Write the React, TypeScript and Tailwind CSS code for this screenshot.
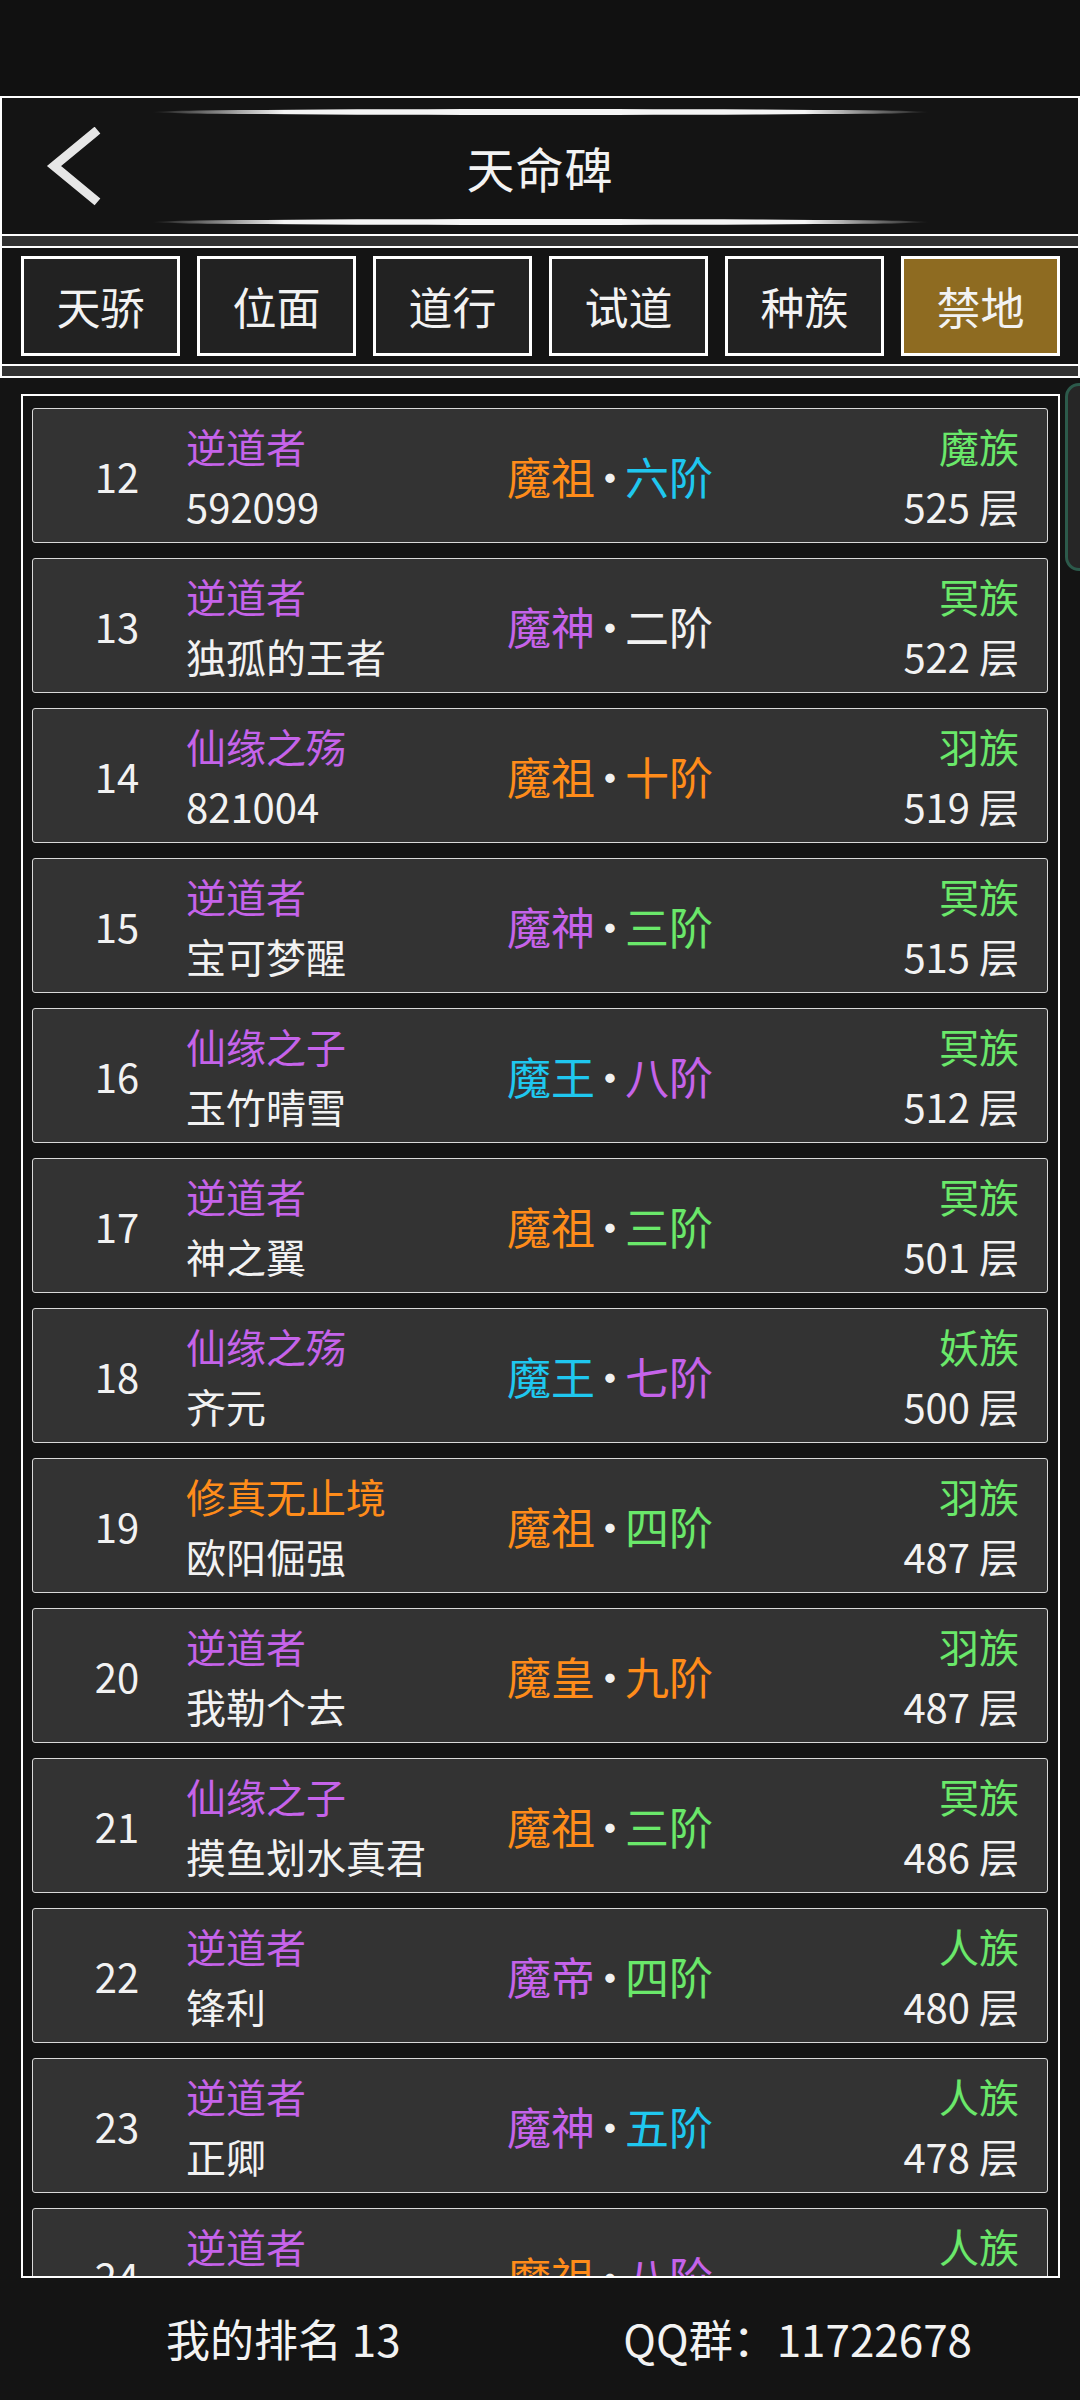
import React from 'react';

type Seg = { text: string; color: string };

interface RankRow {
    rank: number;
    title: Seg;
    name: string;
    realm: Seg;
    stage: Seg;
    race: string;
    floor: number;
}

const PURPLE = 'text-[#c563ea]';
const ORANGE = 'text-[#ff8c1a]';
const CYAN = 'text-[#1fc7ef]';
const GREEN = 'text-[#6ae86a]';
const WHITE = 'text-[#f2f2f2]';

const rows: RankRow[] = [
    { rank: 12, title: { text: '逆道者', color: PURPLE }, name: '592099', realm: { text: '魔祖', color: ORANGE }, stage: { text: '六阶', color: CYAN }, race: '魔族', floor: 525 },
    { rank: 13, title: { text: '逆道者', color: PURPLE }, name: '独孤的王者', realm: { text: '魔神', color: PURPLE }, stage: { text: '二阶', color: WHITE }, race: '冥族', floor: 522 },
    { rank: 14, title: { text: '仙缘之殇', color: PURPLE }, name: '821004', realm: { text: '魔祖', color: ORANGE }, stage: { text: '十阶', color: ORANGE }, race: '羽族', floor: 519 },
    { rank: 15, title: { text: '逆道者', color: PURPLE }, name: '宝可梦醒', realm: { text: '魔神', color: PURPLE }, stage: { text: '三阶', color: GREEN }, race: '冥族', floor: 515 },
    { rank: 16, title: { text: '仙缘之子', color: PURPLE }, name: '玉竹晴雪', realm: { text: '魔王', color: CYAN }, stage: { text: '八阶', color: PURPLE }, race: '冥族', floor: 512 },
    { rank: 17, title: { text: '逆道者', color: PURPLE }, name: '神之翼', realm: { text: '魔祖', color: ORANGE }, stage: { text: '三阶', color: GREEN }, race: '冥族', floor: 501 },
    { rank: 18, title: { text: '仙缘之殇', color: PURPLE }, name: '齐元', realm: { text: '魔王', color: CYAN }, stage: { text: '七阶', color: PURPLE }, race: '妖族', floor: 500 },
    { rank: 19, title: { text: '修真无止境', color: ORANGE }, name: '欧阳倔强', realm: { text: '魔祖', color: ORANGE }, stage: { text: '四阶', color: GREEN }, race: '羽族', floor: 487 },
    { rank: 20, title: { text: '逆道者', color: PURPLE }, name: '我勒个去', realm: { text: '魔皇', color: ORANGE }, stage: { text: '九阶', color: ORANGE }, race: '羽族', floor: 487 },
    { rank: 21, title: { text: '仙缘之子', color: PURPLE }, name: '摸鱼划水真君', realm: { text: '魔祖', color: ORANGE }, stage: { text: '三阶', color: GREEN }, race: '冥族', floor: 486 },
    { rank: 22, title: { text: '逆道者', color: PURPLE }, name: '锋利', realm: { text: '魔帝', color: PURPLE }, stage: { text: '四阶', color: GREEN }, race: '人族', floor: 480 },
    { rank: 23, title: { text: '逆道者', color: PURPLE }, name: '正卿', realm: { text: '魔神', color: PURPLE }, stage: { text: '五阶', color: CYAN }, race: '人族', floor: 478 },
    { rank: 24, title: { text: '逆道者', color: PURPLE }, name: '云中客', realm: { text: '魔祖', color: ORANGE }, stage: { text: '八阶', color: PURPLE }, race: '人族', floor: 476 },
];

const tabs = ['天骄', '位面', '道行', '试道', '种族', '禁地'];

const GlowLine = () => (
    <div className="h-[6px] w-[777px] rounded-[50%] bg-[linear-gradient(90deg,rgba(255,255,255,0)_0%,#f4f4f4_17%,#f4f4f4_84%,rgba(255,255,255,0)_100%)]" />
);

const Row = ({ row }: { row: RankRow }) => (
    <div className="flex h-[135px] shrink-0 items-center rounded-[3px] border border-[#d9d9d9] bg-[#333333]">
        {/* rank */}
        <div className="ml-[29px] w-[110px] text-center text-[40px] leading-[60px] text-[#f2f2f2]">{row.rank}</div>

        {/* title + name */}
        <div className="ml-[14px] w-[300px] whitespace-nowrap text-[40px] leading-[60px]">
            <div className={row.title.color}>{row.title.text}</div>
            <div className="text-[#f2f2f2]">{row.name}</div>
        </div>

        {/* realm */}
        <div className="w-[248px] whitespace-nowrap text-center text-[44px] leading-[60px]">
            <span className={row.realm.color}>{row.realm.text}</span>
            <span className="mx-[-7px] text-[#f2f2f2]">·</span>
            <span className={row.stage.color}>{row.stage.text}</span>
        </div>

        {/* race + floor */}
        <div className="flex-1 whitespace-nowrap pr-[28px] text-right text-[40px] leading-[60px]">
            <div className={GREEN}>{row.race}</div>
            <div className="text-[#f2f2f2]">{row.floor} 层</div>
        </div>
    </div>
);

export default function App() {
    return (
        <div className="flex h-[2400px] w-[1080px] flex-col overflow-hidden bg-[#141414] font-['Noto_Sans_CJK_SC','Noto_Sans',sans-serif] text-[#f2f2f2]">
            {/* status bar */}
            <div className="h-[96px] shrink-0 bg-[#111111]" />

            {/* header */}
            <div className="relative flex h-[140px] shrink-0 flex-col items-center justify-between border-2 border-white bg-[#141414] pb-[9px] pt-[11px]">
                <GlowLine />
                <span className="text-[48px] leading-none tracking-[1px]">天命碑</span>
                <GlowLine />
                <svg className="absolute left-[40px] top-[29px]" width="60" height="80" viewBox="0 0 60 80">
                    <polyline points="52,6 12,39 52,72" fill="none" stroke="#e6e6e6" strokeWidth="9" strokeLinecap="square" />
                </svg>
            </div>

            <div className="h-[10px] shrink-0 border-x-2 border-white bg-[#333333]" />

            {/* tabs */}
            <div className="flex h-[120px] shrink-0 items-center gap-[17px] border-2 border-white bg-[#141414] pl-[19px]">
                {tabs.map((t, i) => (
                    <div
                        key={t}
                        className={`flex h-[100px] w-[159px] items-center justify-center border-[3px] border-white text-[44px] ${
                            i === tabs.length - 1 ? 'bg-[#8e6b21]' : 'bg-[#222222]'
                        }`}
                    >
                        {t}
                    </div>
                ))}
            </div>

            <div className="h-[10px] shrink-0 border-x-2 border-white bg-[#333333]" />

            {/* list */}
            <div className="relative h-[1902px] shrink-0 border-t-2 border-white pl-[21px] pr-[20px] pt-[16px]">
                <div className="flex h-[1884px] flex-col gap-[15px] overflow-hidden border-2 border-white pl-[9px] pr-[10px] pt-[12px]">
                    {rows.map((r) => (
                        <Row key={r.rank} row={r} />
                    ))}
                </div>
                <div className="absolute left-[1065px] top-[5px] h-[188px] w-[30px] rounded-[14px] border-[3px] border-[#2c5a4b] bg-[#262626]" />
            </div>

            {/* footer */}
            <div className="flex h-[120px] shrink-0 items-center justify-between pl-[166px] pr-[108px] text-[44px]">
                <span>我的排名 13</span>
                <span>QQ群：11722678</span>
            </div>
        </div>
    );
}
